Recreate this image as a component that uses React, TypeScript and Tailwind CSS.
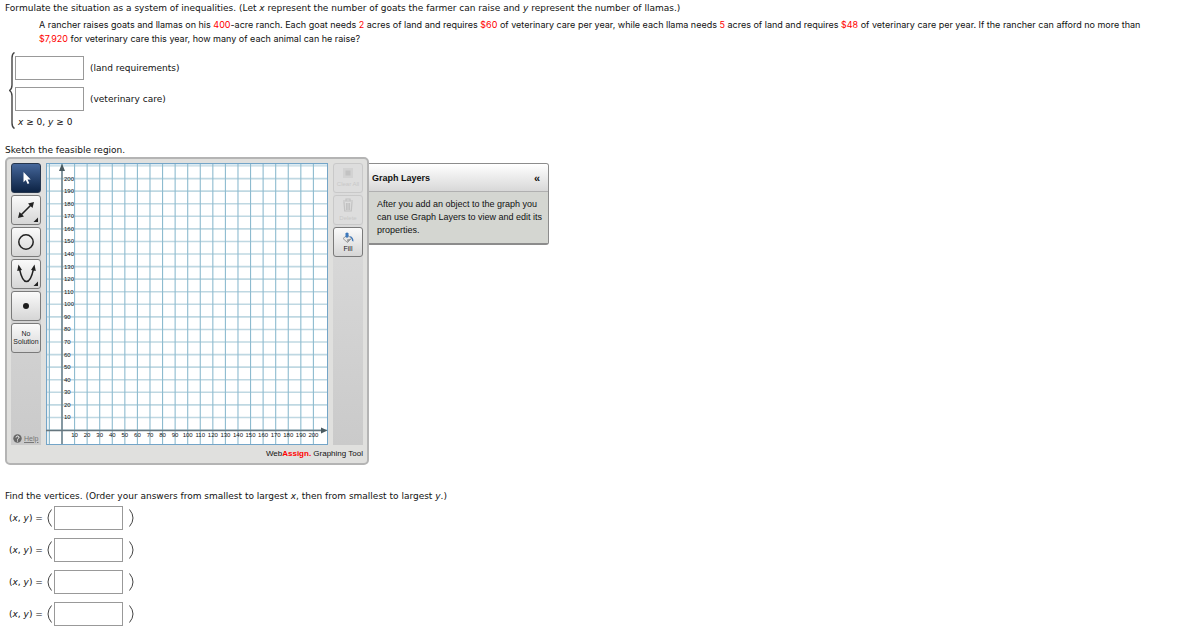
import type { ReactNode } from "react";

const STEP = 12.57;
const ORIGIN_X = 16;
const ORIGIN_Y = 267;
const TICKS = Array.from({ length: 20 }, (_, i) => (i + 1) * 10);
const VERTICES = [1, 2, 3, 4];

function Red({ children }: { children: ReactNode }) {
  return <span className="text-[#ff0000]">{children}</span>;
}

function AnswerBox({ label }: { label: string }) {
  return (
    <input
      type="text"
      aria-label={label}
      className="h-6 w-[69px] border border-[#999999] bg-white px-1 outline-none"
    />
  );
}

function ToolButton({
  label,
  active = false,
  children,
}: {
  label: string;
  active?: boolean;
  children: ReactNode;
}) {
  return (
    <button
      type="button"
      aria-label={label}
      className={
        active
          ? "flex h-[30px] w-[30px] items-center justify-center rounded-[3px] border border-[#26364d] bg-linear-to-b from-[#46689c] to-[#0d2344]"
          : "flex h-[30px] w-[30px] items-center justify-center rounded-[3px] border border-[#7a7a7a] bg-linear-to-b from-[#fafafa] to-[#d6d6d6]"
      }
    >
      {children}
    </button>
  );
}

function SideButton({
  label,
  disabled = false,
  children,
}: {
  label: string;
  disabled?: boolean;
  children: ReactNode;
}) {
  return (
    <button
      type="button"
      disabled={disabled}
      className={
        disabled
          ? "flex h-[30px] w-[30px] flex-col items-center justify-center gap-0.5 rounded-[3px] border border-[#c9c9c9] bg-[#dddddd] text-[6px] leading-[8px] text-[#c8c8c8]"
          : "flex h-[30px] w-[30px] flex-col items-center justify-center gap-0.5 rounded-[3px] border border-[#7a7a7a] bg-linear-to-b from-[#fafafa] to-[#d6d6d6] text-[7px] leading-[8px] text-[#222222]"
      }
    >
      {children}
      <span className="whitespace-nowrap">{label}</span>
    </button>
  );
}

function Graph() {
  return (
    <svg
      width="282"
      height="282"
      viewBox="0 0 282 282"
      role="img"
      aria-label="Coordinate grid from 0 to 200 on both axes"
      className="shrink-0 bg-white"
    >
      <rect x="0" y="0" width="4" height="282" fill="#eaf2f5" />
      <rect x="0" y="0" width="282" height="3" fill="#dcebf3" />
      {[0, ...TICKS].map((t) => (
        <line
          key={`h${t}`}
          x1="0"
          x2="281"
          y1={ORIGIN_Y - (t / 10) * STEP}
          y2={ORIGIN_Y - (t / 10) * STEP}
          stroke="#bfd8e2"
          strokeWidth="1.6"
        />
      ))}
      <line x1="0" x2="281" y1="3" y2="3" stroke="#bfd8e2" strokeWidth="1.2" />
      {[-10, 0, ...TICKS].map((t) => (
        <line
          key={`v${t}`}
          y1="0"
          y2="281"
          x1={ORIGIN_X + (t / 10) * STEP}
          x2={ORIGIN_X + (t / 10) * STEP}
          stroke="#8dbbcf"
          strokeWidth="1.1"
        />
      ))}
      <rect x="0.5" y="0.5" width="281" height="281" fill="none" stroke="#74a5c8" />
      <path d="M16 5V281M0 267.5H278" stroke="#66767e" strokeWidth="1.3" fill="none" />
      <path d="M13 8L16 0.5L19 8ZM275 264.5L281.5 267.5L275 270.5Z" fill="#4a5a60" />
      <g className="font-['Liberation_Sans',Arial,sans-serif]" fontSize="6" fill="#111111">
        {TICKS.map((t) => (
          <text key={`y${t}`} x="18" y={ORIGIN_Y - (t / 10) * STEP + 2}>
            {t}
          </text>
        ))}
        {TICKS.map((t) => (
          <text key={`x${t}`} x={ORIGIN_X + (t / 10) * STEP} y="274" textAnchor="middle">
            {t}
          </text>
        ))}
      </g>
    </svg>
  );
}

function Submenu() {
  return <path d="M25 20.5V25H20.5Z" fill="#222222" />;
}

function GraphingTool() {
  return (
    <div className="flex items-start font-['Liberation_Sans',Arial,sans-serif]">
      <div className="rounded-[5px] border-2 border-[#b4b4b4] bg-[#e0e0de] px-1 pt-1">
        <div className="flex gap-[5px]">
          <div className="flex w-[30px] flex-col gap-0.5 bg-linear-to-b from-[#dedede] to-[#cacaca]">
            <ToolButton label="Select" active>
              <svg width="26" height="26" viewBox="0 0 26 26">
                <path
                  d="M10.500 7V17.2L12.8 15L14.6 19L16.3 18.2L14.6 14.4H17.7Z"
                  fill="#ffffff"
                />
              </svg>
            </ToolButton>
            <ToolButton label="Line">
              <svg width="26" height="26" viewBox="0 0 26 26">
                <path d="M8 18L18 8" stroke="#222222" strokeWidth="1.6" />
                <path d="M5 21L6.500 15L11 19.500ZM21 5L19.500 11L15 6.500Z" fill="#222222" />
                <Submenu />
              </svg>
            </ToolButton>
            <ToolButton label="Circle">
              <svg width="26" height="26" viewBox="0 0 26 26">
                <circle cx="13" cy="13" r="7.200" fill="none" stroke="#222222" strokeWidth="1.500" />
              </svg>
            </ToolButton>
            <ToolButton label="Parabola">
              <svg width="26" height="26" viewBox="0 0 26 26">
                <path
                  d="M6.500 8C8 15 10 20.500 13.500 20.500S19 15 20.500 8"
                  fill="none"
                  stroke="#222222"
                  strokeWidth="1.500"
                />
                <path d="M5.500 3.500L4.200 10L9 9ZM21.500 3.500L18 9L22.800 10Z" fill="#222222" />
                <Submenu />
              </svg>
            </ToolButton>
            <ToolButton label="Point">
              <svg width="26" height="26" viewBox="0 0 26 26">
                <circle cx="13" cy="13" r="3" fill="#1c1c1c" />
              </svg>
            </ToolButton>
            <ToolButton label="No Solution">
              <span className="text-[7px] leading-[8px] text-[#222222]">
                No
                <br />
                Solution
              </span>
            </ToolButton>
            <a
              href="#help"
              className="mt-auto flex items-center gap-0.5 pb-0.5 pl-0.5 text-[7px] leading-[8px] text-[#777777]"
            >
              <svg width="9" height="9" viewBox="0 0 9 9" aria-hidden="true">
                <circle cx="4.500" cy="4.500" r="4.200" fill="#666666" />
                <path
                  d="M3 3.500C3 1.600 6 1.600 6 3.400C6 4.500 4.500 4.400 4.500 5.600M4.500 6.500V7.500"
                  fill="none"
                  stroke="#ffffff"
                  strokeWidth="1"
                />
              </svg>
              <span className="underline">Help</span>
            </a>
          </div>
          <Graph />
          <div className="flex w-[30px] flex-col gap-0.5 bg-linear-to-b from-[#dedede] to-[#cacaca]">
            <SideButton label="Clear All" disabled>
              <svg width="10" height="10" viewBox="0 0 10 10" aria-hidden="true">
                <rect width="10" height="10" fill="#d2d2d2" />
                <rect x="2.500" y="2.500" width="5" height="5" fill="#c2c2c2" />
              </svg>
            </SideButton>
            <SideButton label="Delete" disabled>
              <svg width="12" height="14" viewBox="0 0 12 14" aria-hidden="true">
                <path
                  d="M1 3H11M4 2.500V1H8V2.500M2 4L2.700 13H9.300L10 4M4.500 5V12M6 5V12M7.500 5V12"
                  fill="none"
                  stroke="#c2c2c2"
                  strokeWidth="1.200"
                />
              </svg>
            </SideButton>
            <SideButton label="Fill">
              <svg width="12" height="11" viewBox="0 0 12 11" aria-hidden="true">
                <path d="M1 6.500L5.500 3L9.500 6.500L5.500 10.500Z" fill="#e8e8e8" stroke="#8c8c8c" strokeWidth="0.800" />
                <path d="M5 7.500L9.500 6.500L5.500 10.500Z" fill="#9a9a9a" />
                <path d="M3.500 1.500Q5 -0.500 6.500 1.500V5Q5 6.500 3.500 5Z" fill="#3c78bc" />
                <path d="M7.500 4Q11.500 4.500 11.500 9.500Q9.500 9 9.500 6.500Z" fill="#3c78bc" />
              </svg>
            </SideButton>
          </div>
        </div>
        <p className="pt-0.5 pb-[3px] text-right text-[8px] leading-[13px] text-[#111111]">
          Web<b className="text-[#ff0000]">Assign.</b> Graphing Tool
        </p>
      </div>
      <section className="mt-1.5 w-[180px] rounded-r-[3px] border border-b-2 border-l-0 border-[#8c8c8c] text-[9px] text-[#111111]">
        <header className="flex h-7 items-center justify-between rounded-tr-[3px] border-b border-[#b0b0b0] bg-linear-to-b from-white to-[#d8d8d8] pr-2 pl-[3px]">
          <h2 className="font-bold">Graph Layers</h2>
          <button
            type="button"
            aria-label="Collapse Graph Layers"
            className="text-[11px] leading-3 font-bold"
          >
            «
          </button>
        </header>
        <p className="bg-[#d4d6d1] pt-1.5 pr-1 pb-1.5 pl-2 leading-[13px]">
          After you add an object to the graph you
          <br />
          can use Graph Layers to view and edit its properties.
        </p>
      </section>
    </div>
  );
}

export default function App() {
  return (
    <main className="bg-white pt-px pl-[5px] font-['DejaVu_Sans',Verdana,sans-serif] text-[9px] leading-[14px] text-[#111111]">
      <p>
        Formulate the situation as a system of inequalities. (Let <i>x</i> represent the number of
        goats the farmer can raise and <i>y</i> represent the number of llamas.)
      </p>
      <p className="mt-[3px] pl-[34px] font-['Inter',Verdana,sans-serif]">
        A rancher raises goats and llamas on his <Red>400</Red>-acre ranch. Each goat needs{" "}
        <Red>2</Red> acres of land and requires <Red>$60</Red> of veterinary care per year, while
        each llama needs <Red>5</Red> acres of land and requires <Red>$48</Red> of veterinary care
        per year. If the rancher can afford no more than
        <br />
        <Red>$7,920</Red> for veterinary care this year, how many of each animal can he raise?
      </p>

      <div className="mt-1.5 flex pl-1">
        <svg width="6" height="77" viewBox="0 0 6 77" aria-hidden="true">
          <path
            d="M5.500 0.500Q3 2 3 6V33Q3 37 0.500 38.500Q3 40 3 44V71Q3 75 5.500 76.500"
            fill="none"
            stroke="#444444"
            strokeWidth="1.400"
          />
        </svg>
        <div className="flex flex-col pt-1">
          <div className="flex items-center gap-1.5">
            <AnswerBox label="Land requirements inequality" />
            <span>(land requirements)</span>
          </div>
          <div className="mt-[7px] flex items-center gap-1.5">
            <AnswerBox label="Veterinary care inequality" />
            <span>(veterinary care)</span>
          </div>
          <p className="mt-1 pl-[3px]">
            <i>x</i> ≥ 0, <i>y</i> ≥ 0
          </p>
        </div>
      </div>

      <p className="mt-3.5">Sketch the feasible region.</p>
      <GraphingTool />

      <p className="mt-6">
        Find the vertices. (Order your answers from smallest to largest <i>x</i>, then from smallest
        to largest <i>y</i>.)
      </p>
      <div className="mt-[3px] flex flex-col gap-2 pl-1">
        {VERTICES.map((n) => (
          <div key={n} className="flex items-center">
            <span>
              (<i>x</i>, <i>y</i>) =
            </span>
            <svg width="5" height="18" viewBox="0 0 5 18" className="ml-1 mr-0.5" aria-hidden="true">
              <path d="M4.500 0.500Q-2.500 9 4.500 17.500" fill="none" stroke="#444444" />
            </svg>
            <AnswerBox label={`Vertex ${n}`} />
            <svg width="5" height="18" viewBox="0 0 5 18" className="ml-1.5" aria-hidden="true">
              <path d="M0.500 0.500Q7.500 9 0.500 17.500" fill="none" stroke="#444444" />
            </svg>
          </div>
        ))}
      </div>
    </main>
  );
}
